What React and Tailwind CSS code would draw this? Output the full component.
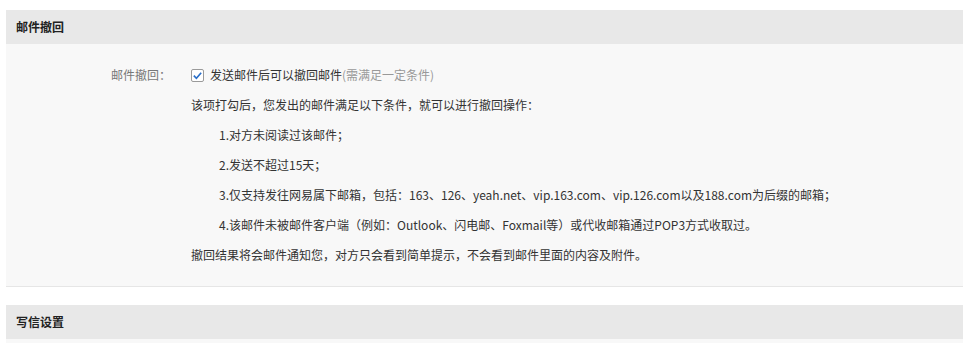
import React from "react";

const font = { fontFamily: '"Microsoft YaHei", "Noto Sans CJK SC", "Noto Sans", sans-serif' };

function SectionHeader({ title }) {
  return (
    <div className="h-[34px] bg-[#e8e8e8] pl-[10px] flex items-center">
      <h3 className="text-[12px] font-bold text-[#222]">{title}</h3>
    </div>
  );
}

function Checkbox() {
  return (
    <span className="w-[13px] h-[13px] rounded-[2px] border border-[#9a9a9a] bg-white flex items-center justify-center shrink-0">
      <svg viewBox="0 0 12 12" className="w-[11px] h-[11px]">
        <path d="M2 6.2 L4.8 9 L10 3" fill="none" stroke="#2a6fc9" strokeWidth="1.8" />
      </svg>
    </span>
  );
}

export default function App() {
  const rules = [
    "1.对方未阅读过该邮件；",
    "2.发送不超过15天；",
    "3.仅支持发往网易属下邮箱，包括：163、126、yeah.net、vip.163.com、vip.126.com以及188.com为后缀的邮箱；",
    "4.该邮件未被邮件客户端（例如：Outlook、闪电邮、Foxmail等）或代收邮箱通过POP3方式收取过。",
  ];

  return (
    <div className="bg-white pt-[10px] pl-[6px] min-h-[343px] text-[12px]" style={font}>
      <section>
        <SectionHeader title="邮件撤回" />
        <div className="bg-[#f8f8f8] border-b border-[#e6e6e6] pt-[16px] pb-[16px] flex">
          <div className="w-[165px] shrink-0 text-right leading-[30px] text-[#777]">邮件撤回：</div>
          <div className="pl-[20px] leading-[30px] text-[#333]">
            <label className="flex items-center gap-[6px]">
              <Checkbox />
              <span>
                发送邮件后可以撤回邮件<span className="text-[#999]">(需满足一定条件)</span>
              </span>
            </label>
            <p>该项打勾后，您发出的邮件满足以下条件，就可以进行撤回操作：</p>
            <ul className="pl-[28px]">
              {rules.map((r) => (
                <li key={r}>{r}</li>
              ))}
            </ul>
            <p>撤回结果将会邮件通知您，对方只会看到简单提示，不会看到邮件里面的内容及附件。</p>
          </div>
        </div>
      </section>

      <section className="mt-[18px]">
        <SectionHeader title="写信设置" />
        <div className="bg-[#f8f8f8] h-[20px]" />
      </section>
    </div>
  );
}
